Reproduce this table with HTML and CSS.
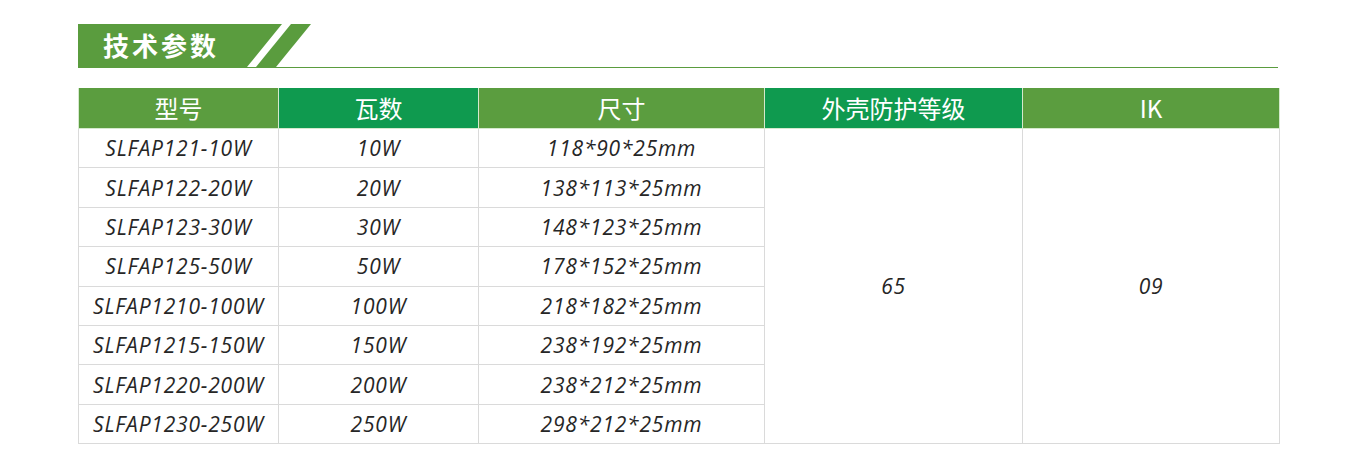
FILE: index.html
```html
<!DOCTYPE html>
<html lang="zh">
<head>
<meta charset="utf-8">
<title>技术参数</title>
<link rel="stylesheet" href="styles.css">
</head>
<body>
<div class="page">
  <div class="title-bar">
    <div class="title-badge">
      <svg class="title-shape" width="240" height="44" viewBox="0 0 240 44">
        <polygon points="0,0 204,0 169,43 0,43" fill="#5a9c3e"/>
        <polygon points="213,0 233,0 198,43 178,43" fill="#5a9c3e"/>
      </svg>
      <span class="title-text">技术参数</span>
    </div>
  </div>
  <table class="spec">
    <colgroup>
      <col class="c1"><col class="c2"><col class="c3"><col class="c4"><col class="c5">
    </colgroup>
    <thead>
      <tr>
        <th class="g1">型号</th>
        <th class="g2">瓦数</th>
        <th class="g1">尺寸</th>
        <th class="g2">外壳防护等级</th>
        <th class="g1">IK</th>
      </tr>
    </thead>
    <tbody>
      <tr><td>SLFAP121-10W</td><td>10W</td><td>118*90*25mm</td><td rowspan="8">65</td><td rowspan="8">09</td></tr>
      <tr><td>SLFAP122-20W</td><td>20W</td><td>138*113*25mm</td></tr>
      <tr><td>SLFAP123-30W</td><td>30W</td><td>148*123*25mm</td></tr>
      <tr><td>SLFAP125-50W</td><td>50W</td><td>178*152*25mm</td></tr>
      <tr><td>SLFAP1210-100W</td><td>100W</td><td>218*182*25mm</td></tr>
      <tr><td>SLFAP1215-150W</td><td>150W</td><td>238*192*25mm</td></tr>
      <tr><td>SLFAP1220-200W</td><td>200W</td><td>238*212*25mm</td></tr>
      <tr><td>SLFAP1230-250W</td><td>250W</td><td>298*212*25mm</td></tr>
    </tbody>
  </table>
</div>
</body>
</html>
```

FILE: styles.css
```css
html, body {
  margin: 0;
  padding: 0;
  background: #ffffff;
}
.page {
  width: 1200px;
  margin-left: 78px;
  padding-top: 24px;
}
.title-bar {
  height: 43px;
  border-bottom: 1px solid #5a9c3e;
}
.title-badge {
  position: relative;
  width: 240px;
  height: 43px;
}
.title-shape {
  position: absolute;
  left: 0;
  top: 0;
  display: block;
}
.title-text {
  position: absolute;
  left: 25px;
  top: 6px;
  font-family: "Noto Sans CJK SC", sans-serif;
  font-weight: 700;
  font-size: 26px;
  line-height: 30px;
  letter-spacing: 3px;
  color: #ffffff;
}
.spec {
  margin-top: 20px;
  width: 1201px;
  border-collapse: collapse;
  table-layout: fixed;
}
.c1 { width: 200px; }
.c2 { width: 200px; }
.c3 { width: 286px; }
.c4 { width: 258px; }
.c5 { width: 257px; }
.spec th {
  height: 40px;
  padding: 0;
  font-family: "Noto Sans CJK SC", sans-serif;
  font-weight: 400;
  font-size: 24px;
  line-height: 28px;
  color: #ffffff;
  text-align: center;
  border-left: 1px solid #d5e9cd;
  border-right: 1px solid #d5e9cd;
  border-bottom: 1px solid #d5e9cd;
}
.spec th.g1 { background: #5b9d3f; }
.spec th.g2 { background: #0f9a4f; }
.spec td {
  height: 38.4px;
  padding: 0;
  border: 1px solid #dadada;
  font-family: "Open Sans", sans-serif;
  font-style: italic;
  font-size: 21px;
  letter-spacing: 0.8px;
  color: #262626;
  text-align: center;
  vertical-align: middle;
}
```
